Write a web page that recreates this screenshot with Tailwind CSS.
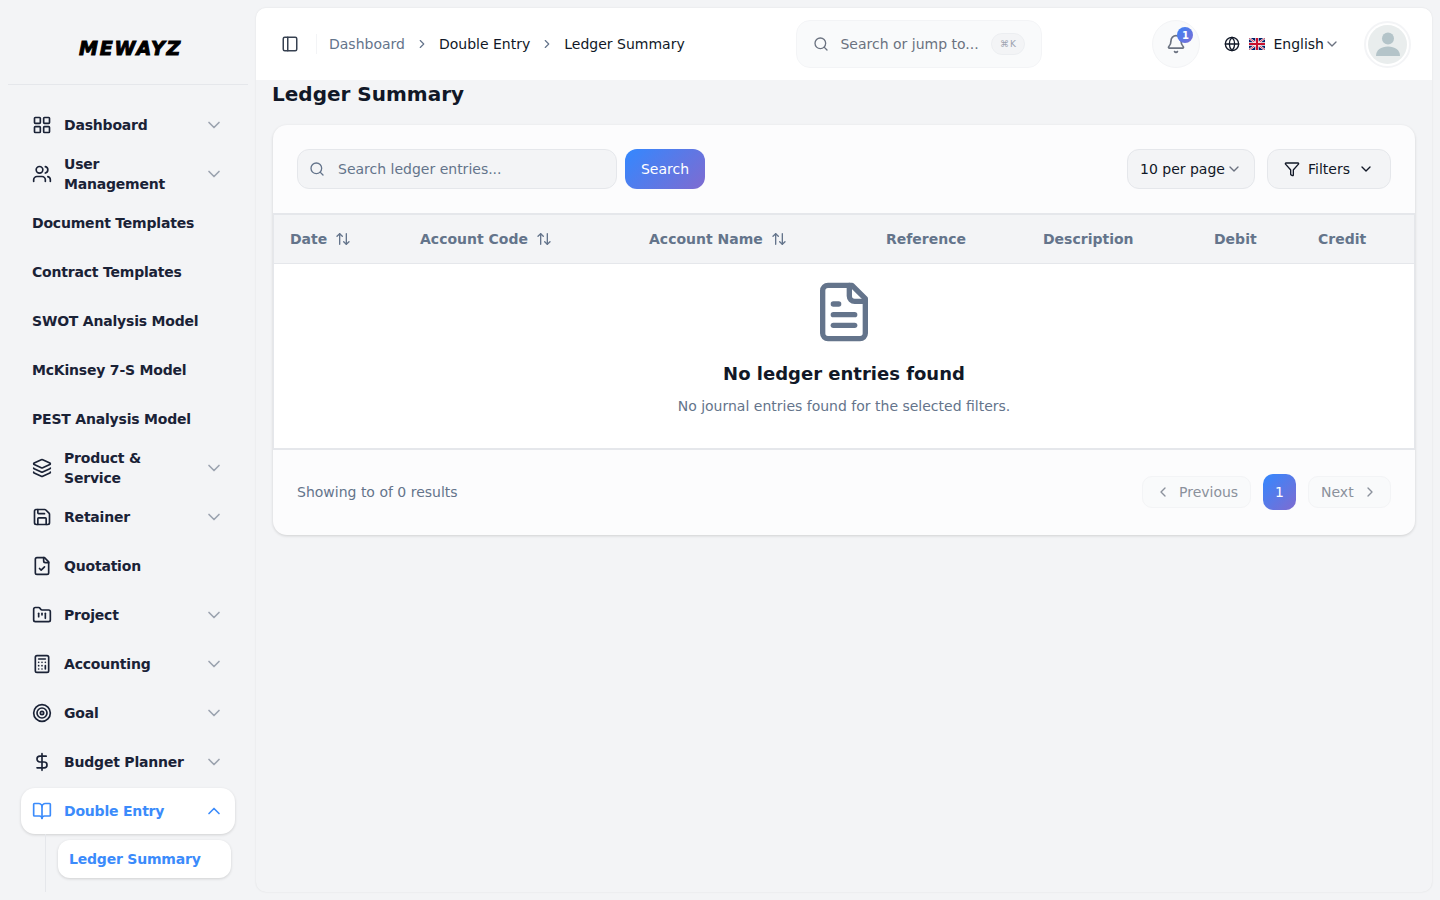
<!DOCTYPE html>
<html lang="en">
<head>
  <meta charset="UTF-8" />
  <title>Ledger Summary</title>
  <script src="https://cdn.jsdelivr.net/npm/@tailwindcss/browser@4"></script>
</head>
<body class="h-screen overflow-hidden bg-[#f3f4f6] font-['DejaVu_Sans',sans-serif] text-[#111827]">
<div class="flex h-[900px]">

  <!-- sidebar -->
  <aside class="w-[256px] shrink-0 overflow-hidden">
    <div class="mx-[8px] h-[85px] border-b border-[#e5e7eb] flex items-center justify-center pt-[13px] pl-[5px]">
      <span class="italic font-bold text-[19px] leading-none tracking-[1.8px] text-black [-webkit-text-stroke:1px_black]">MEWAYZ</span>
    </div>
    <nav class="pt-[17px] pl-[21px] w-[235px] flex flex-col gap-[4px] text-sm font-bold tracking-[-0.2px] text-[#1a2236]">
      <a class="h-[45px] flex items-center gap-[12px] pl-[11px] pr-[11px]">
        <svg class="w-5 h-5 shrink-0" viewBox="0 0 24 24" fill="none" stroke="currentColor" stroke-width="2" stroke-linecap="round" stroke-linejoin="round"><rect x="3" y="3" width="7" height="7" rx="1"/><rect x="14" y="3" width="7" height="7" rx="1"/><rect x="14" y="14" width="7" height="7" rx="1"/><rect x="3" y="14" width="7" height="7" rx="1"/></svg>
        <span class="flex-1">Dashboard</span>
        <svg class="w-5 h-5 text-[#9ca3af]" viewBox="0 0 24 24" fill="none" stroke="currentColor" stroke-width="2" stroke-linecap="round" stroke-linejoin="round"><path d="m6 9 6 6 6-6"/></svg>
      </a>
      <a class="h-[45px] flex items-center gap-[12px] pl-[11px] pr-[11px]">
        <svg class="w-5 h-5 shrink-0" viewBox="0 0 24 24" fill="none" stroke="currentColor" stroke-width="2" stroke-linecap="round" stroke-linejoin="round"><path d="M16 21v-2a4 4 0 0 0-4-4H6a4 4 0 0 0-4 4v2"/><circle cx="9" cy="7" r="4"/><path d="M22 21v-2a4 4 0 0 0-3-3.87"/><path d="M16 3.13a4 4 0 0 1 0 7.75"/></svg>
        <span class="flex-1">User<br>Management</span>
        <svg class="w-5 h-5 text-[#9ca3af]" viewBox="0 0 24 24" fill="none" stroke="currentColor" stroke-width="2" stroke-linecap="round" stroke-linejoin="round"><path d="m6 9 6 6 6-6"/></svg>
      </a>
      <a class="h-[45px] flex items-center pl-[11px]">Document Templates</a>
      <a class="h-[45px] flex items-center pl-[11px]">Contract Templates</a>
      <a class="h-[45px] flex items-center pl-[11px]">SWOT Analysis Model</a>
      <a class="h-[45px] flex items-center pl-[11px]">McKinsey 7-S Model</a>
      <a class="h-[45px] flex items-center pl-[11px]">PEST Analysis Model</a>
      <a class="h-[45px] flex items-center gap-[12px] pl-[11px] pr-[11px]">
        <svg class="w-5 h-5 shrink-0" viewBox="0 0 24 24" fill="none" stroke="currentColor" stroke-width="2" stroke-linecap="round" stroke-linejoin="round"><path d="M12.83 2.18a2 2 0 0 0-1.66 0L2.6 6.08a1 1 0 0 0 0 1.83l8.58 3.91a2 2 0 0 0 1.66 0l8.58-3.9a1 1 0 0 0 0-1.83z"/><path d="M2 12a1 1 0 0 0 .58.91l8.6 3.91a2 2 0 0 0 1.65 0l8.58-3.9A1 1 0 0 0 22 12"/><path d="M2 17a1 1 0 0 0 .58.91l8.6 3.91a2 2 0 0 0 1.65 0l8.58-3.9A1 1 0 0 0 22 17"/></svg>
        <span class="flex-1">Product &amp;<br>Service</span>
        <svg class="w-5 h-5 text-[#9ca3af]" viewBox="0 0 24 24" fill="none" stroke="currentColor" stroke-width="2" stroke-linecap="round" stroke-linejoin="round"><path d="m6 9 6 6 6-6"/></svg>
      </a>
      <a class="h-[45px] flex items-center gap-[12px] pl-[11px] pr-[11px]">
        <svg class="w-5 h-5 shrink-0" viewBox="0 0 24 24" fill="none" stroke="currentColor" stroke-width="2" stroke-linecap="round" stroke-linejoin="round"><path d="M15.2 3a2 2 0 0 1 1.4.6l3.8 3.8a2 2 0 0 1 .6 1.4V19a2 2 0 0 1-2 2H5a2 2 0 0 1-2-2V5a2 2 0 0 1 2-2z"/><path d="M17 21v-7a1 1 0 0 0-1-1H8a1 1 0 0 0-1 1v7"/><path d="M7 3v4a1 1 0 0 0 1 1h7"/></svg>
        <span class="flex-1">Retainer</span>
        <svg class="w-5 h-5 text-[#9ca3af]" viewBox="0 0 24 24" fill="none" stroke="currentColor" stroke-width="2" stroke-linecap="round" stroke-linejoin="round"><path d="m6 9 6 6 6-6"/></svg>
      </a>
      <a class="h-[45px] flex items-center gap-[12px] pl-[11px] pr-[11px]">
        <svg class="w-5 h-5 shrink-0" viewBox="0 0 24 24" fill="none" stroke="currentColor" stroke-width="2" stroke-linecap="round" stroke-linejoin="round"><path d="M15 2H6a2 2 0 0 0-2 2v16a2 2 0 0 0 2 2h12a2 2 0 0 0 2-2V7Z"/><path d="M14 2v4a2 2 0 0 0 2 2h4"/><path d="m9 15 2 2 4-4"/></svg>
        <span class="flex-1">Quotation</span>
      </a>
      <a class="h-[45px] flex items-center gap-[12px] pl-[11px] pr-[11px]">
        <svg class="w-5 h-5 shrink-0" viewBox="0 0 24 24" fill="none" stroke="currentColor" stroke-width="2" stroke-linecap="round" stroke-linejoin="round"><path d="M4 20h16a2 2 0 0 0 2-2V8a2 2 0 0 0-2-2h-7.93a2 2 0 0 1-1.66-.9l-.82-1.2A2 2 0 0 0 7.93 3H4a2 2 0 0 0-2 2v13c0 1.1.9 2 2 2Z"/><path d="M8 10v4"/><path d="M12 10v2"/><path d="M16 10v6"/></svg>
        <span class="flex-1">Project</span>
        <svg class="w-5 h-5 text-[#9ca3af]" viewBox="0 0 24 24" fill="none" stroke="currentColor" stroke-width="2" stroke-linecap="round" stroke-linejoin="round"><path d="m6 9 6 6 6-6"/></svg>
      </a>
      <a class="h-[45px] flex items-center gap-[12px] pl-[11px] pr-[11px]">
        <svg class="w-5 h-5 shrink-0" viewBox="0 0 24 24" fill="none" stroke="currentColor" stroke-width="2" stroke-linecap="round" stroke-linejoin="round"><rect width="16" height="20" x="4" y="2" rx="2"/><line x1="8" x2="16" y1="6" y2="6"/><line x1="16" x2="16" y1="14" y2="18"/><path d="M16 10h.01"/><path d="M12 10h.01"/><path d="M8 10h.01"/><path d="M12 14h.01"/><path d="M8 14h.01"/><path d="M12 18h.01"/><path d="M8 18h.01"/></svg>
        <span class="flex-1">Accounting</span>
        <svg class="w-5 h-5 text-[#9ca3af]" viewBox="0 0 24 24" fill="none" stroke="currentColor" stroke-width="2" stroke-linecap="round" stroke-linejoin="round"><path d="m6 9 6 6 6-6"/></svg>
      </a>
      <a class="h-[45px] flex items-center gap-[12px] pl-[11px] pr-[11px]">
        <svg class="w-5 h-5 shrink-0" viewBox="0 0 24 24" fill="none" stroke="currentColor" stroke-width="2" stroke-linecap="round" stroke-linejoin="round"><circle cx="12" cy="12" r="10"/><circle cx="12" cy="12" r="6"/><circle cx="12" cy="12" r="2"/></svg>
        <span class="flex-1">Goal</span>
        <svg class="w-5 h-5 text-[#9ca3af]" viewBox="0 0 24 24" fill="none" stroke="currentColor" stroke-width="2" stroke-linecap="round" stroke-linejoin="round"><path d="m6 9 6 6 6-6"/></svg>
      </a>
      <a class="h-[45px] flex items-center gap-[12px] pl-[11px] pr-[11px]">
        <svg class="w-5 h-5 shrink-0" viewBox="0 0 24 24" fill="none" stroke="currentColor" stroke-width="2" stroke-linecap="round" stroke-linejoin="round"><line x1="12" x2="12" y1="2" y2="22"/><path d="M17 5H9.5a3.5 3.5 0 0 0 0 7h5a3.5 3.5 0 0 1 0 7H6"/></svg>
        <span class="flex-1">Budget Planner</span>
        <svg class="w-5 h-5 text-[#9ca3af]" viewBox="0 0 24 24" fill="none" stroke="currentColor" stroke-width="2" stroke-linecap="round" stroke-linejoin="round"><path d="m6 9 6 6 6-6"/></svg>
      </a>
      <a class="h-[46px] flex items-center gap-[12px] pl-[11px] pr-[11px] bg-white rounded-[14px] shadow-[0_1px_3px_rgba(0,0,0,0.15)] text-[#3b8bfb]">
        <svg class="w-5 h-5 shrink-0" viewBox="0 0 24 24" fill="none" stroke="currentColor" stroke-width="2" stroke-linecap="round" stroke-linejoin="round"><path d="M12 7v14"/><path d="M3 18a1 1 0 0 1-1-1V4a1 1 0 0 1 1-1h5a4 4 0 0 1 4 4 4 4 0 0 1 4-4h5a1 1 0 0 1 1 1v13a1 1 0 0 1-1 1h-6a3 3 0 0 0-3 3 3 3 0 0 0-3-3z"/></svg>
        <span class="flex-1">Double Entry</span>
        <svg class="w-5 h-5" viewBox="0 0 24 24" fill="none" stroke="currentColor" stroke-width="2" stroke-linecap="round" stroke-linejoin="round"><path d="m18 15-6-6-6 6"/></svg>
      </a>
      <div class="-mt-[4px] ml-[24px] pl-[12px] h-[58px] border-l border-[#e5e7eb] pt-[6px]">
        <a class="h-[38px] w-[173px] flex items-center pl-[11px] bg-white rounded-[12px] shadow-[0_1px_3px_rgba(0,0,0,0.15)] text-[#3b8bfb]">Ledger Summary</a>
      </div>
    </nav>
  </aside>

  <!-- main panel -->
  <main class="mt-[8px] w-[1176px] h-[884px] rounded-[10px] bg-[#f3f4f6] shadow-[0_0_2px_rgba(0,0,0,0.1)] overflow-hidden">
    <header class="h-[72px] bg-white flex items-center pl-[25px] pr-[21px]">
      <svg class="w-[18px] h-[18px] text-[#374151] shrink-0" viewBox="0 0 24 24" fill="none" stroke="currentColor" stroke-width="2" stroke-linecap="round" stroke-linejoin="round"><rect width="18" height="18" x="3" y="3" rx="2"/><path d="M9 3v18"/></svg>
      <div class="w-px h-[20px] bg-[#f3f4f6] ml-[17px] mr-[12px]"></div>
      <div class="flex items-center text-sm text-[#111827]">
        <span class="text-[#64748b]">Dashboard</span>
        <svg class="w-[14px] h-[14px] mx-[10px] text-[#64748b]" viewBox="0 0 24 24" fill="none" stroke="currentColor" stroke-width="2" stroke-linecap="round" stroke-linejoin="round"><path d="m9 18 6-6-6-6"/></svg>
        <span>Double Entry</span>
        <svg class="w-[14px] h-[14px] mx-[10px] text-[#64748b]" viewBox="0 0 24 24" fill="none" stroke="currentColor" stroke-width="2" stroke-linecap="round" stroke-linejoin="round"><path d="m9 18 6-6-6-6"/></svg>
        <span>Ledger Summary</span>
      </div>
      <div class="ml-auto w-[246px] h-[48px] rounded-[14px] bg-[#f9fafb] border border-[#f3f4f6] flex items-center pl-[16px] pr-[16px] text-sm text-[#6b7280]">
        <svg class="w-4 h-4 shrink-0" viewBox="0 0 24 24" fill="none" stroke="currentColor" stroke-width="2" stroke-linecap="round" stroke-linejoin="round"><circle cx="11" cy="11" r="8"/><path d="m21 21-4.3-4.3"/></svg>
        <span class="ml-[11px]">Search or jump to...</span>
        <span class="ml-auto w-[34px] h-[22px] rounded-full bg-[#f3f4f6] border border-[#eceef1] flex items-center justify-center text-[9px] tracking-[1px] text-[#9ca3af]">⌘K</span>
      </div>
      <div class="relative ml-[110px] w-[48px] h-[48px] rounded-full bg-[#f9fafb] border border-[#f3f4f6] flex items-center justify-center text-[#6b7280]">
        <svg class="w-5 h-5" viewBox="0 0 24 24" fill="none" stroke="currentColor" stroke-width="2" stroke-linecap="round" stroke-linejoin="round"><path d="M10.268 21a2 2 0 0 0 3.464 0"/><path d="M3.262 15.326A1 1 0 0 0 4 17h16a1 1 0 0 0 .74-1.673C19.41 13.956 18 12.499 18 8A6 6 0 0 0 6 8c0 4.499-1.411 5.956-2.738 7.326"/></svg>
        <span class="absolute top-[6px] right-[6px] w-[16px] h-[16px] rounded-full bg-[linear-gradient(135deg,#3b82f6,#7b6dd4)] text-white text-[10px] font-bold flex items-center justify-center">1</span>
      </div>
      <div class="ml-[24px] flex items-center text-sm">
        <svg class="w-4 h-4" viewBox="0 0 24 24" fill="none" stroke="currentColor" stroke-width="2" stroke-linecap="round" stroke-linejoin="round"><circle cx="12" cy="12" r="10"/><path d="M12 2a14.5 14.5 0 0 0 0 20 14.5 14.5 0 0 0 0-20"/><path d="M2 12h20"/></svg>
        <svg class="ml-[9px] w-[16px] h-[12px] rounded-[1px]" viewBox="0 0 60 45" preserveAspectRatio="none"><rect width="60" height="45" fill="#012169"/><path d="M0 0 60 45M60 0 0 45" stroke="#fff" stroke-width="8"/><path d="M0 0 60 45M60 0 0 45" stroke="#c8102e" stroke-width="3"/><path d="M30 0v45M0 22.500h60" stroke="#fff" stroke-width="13"/><path d="M30 0v45M0 22.500h60" stroke="#c8102e" stroke-width="8"/></svg>
        <span class="ml-[8px]">English</span>
        <svg class="w-4 h-4 text-[#6b7280]" viewBox="0 0 24 24" fill="none" stroke="currentColor" stroke-width="2" stroke-linecap="round" stroke-linejoin="round"><path d="m6 9 6 6 6-6"/></svg>
      </div>
      <div class="ml-[24px] w-[47px] h-[47px] rounded-full border-2 border-[#f3f4f6] p-[2px]">
        <div class="w-full h-full rounded-full bg-[#e9eded] flex items-center justify-center overflow-hidden">
          <svg class="w-[28px] h-[28px] text-[#b4c4c9]" viewBox="0 0 28 28" fill="currentColor"><circle cx="14" cy="8.500" r="6"/><path d="M2 26c0-6 5-9.500 12-9.500S26 20 26 26z"/></svg>
        </div>
      </div>
    </header>

    <div class="pl-[16px] pr-[17px]">
      <h1 class="text-xl font-bold leading-[28px]">Ledger Summary</h1>
      <section class="mt-[17px] ml-[1px] w-[1142px] h-[410px] rounded-[14px] bg-[#fcfcfd] shadow-[0_1px_3px_rgba(0,0,0,0.15)] overflow-hidden flex flex-col">
        <div class="h-[88px] shrink-0 flex items-center px-[24px] text-sm">
          <div class="w-[320px] h-[40px] rounded-[12px] bg-[#f3f4f6] border border-[#e5e7eb] flex items-center pl-[11px] text-[#64748b]">
            <svg class="w-4 h-4 shrink-0" viewBox="0 0 24 24" fill="none" stroke="currentColor" stroke-width="2" stroke-linecap="round" stroke-linejoin="round"><circle cx="11" cy="11" r="8"/><path d="m21 21-4.3-4.3"/></svg>
            <span class="ml-[13px]">Search ledger entries...</span>
          </div>
          <button class="ml-[8px] w-[80px] h-[40px] rounded-[12px] bg-[linear-gradient(135deg,#3388ff,#7f6bd0)] text-white">Search</button>
          <div class="ml-auto w-[128px] h-[40px] rounded-[12px] bg-[#f3f4f6] border border-[#e5e7eb] flex items-center pl-[12px]">
            <span>10 per page</span>
            <svg class="ml-[1px] w-4 h-4 text-[#6b7280]" viewBox="0 0 24 24" fill="none" stroke="currentColor" stroke-width="2" stroke-linecap="round" stroke-linejoin="round"><path d="m6 9 6 6 6-6"/></svg>
          </div>
          <div class="ml-[12px] w-[124px] h-[40px] rounded-[12px] bg-[#f3f4f6] border border-[#e5e7eb] flex items-center pl-[16px]">
            <svg class="w-4 h-4" viewBox="0 0 24 24" fill="none" stroke="currentColor" stroke-width="2" stroke-linecap="round" stroke-linejoin="round"><path d="M10 20a1 1 0 0 0 .553.895l2 1A1 1 0 0 0 14 21v-7a2 2 0 0 1 .517-1.341L21.74 4.67A1 1 0 0 0 21 3H3a1 1 0 0 0-.742 1.67l7.225 7.989A2 2 0 0 1 10 14z"/></svg>
            <span class="ml-[8px]">Filters</span>
            <svg class="ml-[8px] w-4 h-4" viewBox="0 0 24 24" fill="none" stroke="currentColor" stroke-width="2" stroke-linecap="round" stroke-linejoin="round"><path d="m6 9 6 6 6-6"/></svg>
          </div>
        </div>
        <div class="border-2 border-x-[1px] border-[#e5e7eb] border-b-2">
          <div class="h-[49px] bg-[#f3f4f6] border-b border-[#e5e7eb] grid grid-cols-[130px_229px_237px_157px_171px_104px_1fr] items-center pl-[16px] text-sm font-bold text-[#64748b]">
            <div class="flex items-center gap-[8px]">Date
              <svg class="w-4 h-4" viewBox="0 0 24 24" fill="none" stroke="currentColor" stroke-width="2" stroke-linecap="round" stroke-linejoin="round"><path d="m21 16-4 4-4-4"/><path d="M17 20V4"/><path d="m3 8 4-4 4 4"/><path d="M7 4v16"/></svg>
            </div>
            <div class="flex items-center gap-[8px]">Account Code
              <svg class="w-4 h-4" viewBox="0 0 24 24" fill="none" stroke="currentColor" stroke-width="2" stroke-linecap="round" stroke-linejoin="round"><path d="m21 16-4 4-4-4"/><path d="M17 20V4"/><path d="m3 8 4-4 4 4"/><path d="M7 4v16"/></svg>
            </div>
            <div class="flex items-center gap-[8px]">Account Name
              <svg class="w-4 h-4" viewBox="0 0 24 24" fill="none" stroke="currentColor" stroke-width="2" stroke-linecap="round" stroke-linejoin="round"><path d="m21 16-4 4-4-4"/><path d="M17 20V4"/><path d="m3 8 4-4 4 4"/><path d="M7 4v16"/></svg>
            </div>
            <div>Reference</div>
            <div>Description</div>
            <div>Debit</div>
            <div>Credit</div>
          </div>
          <div class="h-[184px] bg-white flex flex-col items-center pt-[16px]">
            <svg class="w-16 h-16 text-[#64748b]" viewBox="0 0 24 24" fill="none" stroke="currentColor" stroke-width="2" stroke-linecap="round" stroke-linejoin="round"><path d="M15 2H6a2 2 0 0 0-2 2v16a2 2 0 0 0 2 2h12a2 2 0 0 0 2-2V7Z"/><path d="M14 2v4a2 2 0 0 0 2 2h4"/><path d="M10 9H8"/><path d="M16 13H8"/><path d="M16 17H8"/></svg>
            <h3 class="mt-[16px] text-lg font-bold leading-[28px]">No ledger entries found</h3>
            <p class="mt-[8px] text-sm leading-[20px] text-[#64748b]">No journal entries found for the selected filters.</p>
          </div>
        </div>
        <div class="flex-1 flex items-center px-[24px] pb-[2px] text-sm">
          <span class="text-[#64748b]">Showing to of 0 results</span>
          <div class="ml-auto flex items-center gap-[12px]">
            <div class="w-[109px] h-[32px] rounded-[10px] bg-[#f9fafb] border border-[#f3f4f6] flex items-center pl-[12px] text-[#8b919c]">
              <svg class="w-[16px] h-[16px]" viewBox="0 0 24 24" fill="none" stroke="currentColor" stroke-width="2" stroke-linecap="round" stroke-linejoin="round"><path d="m15 18-6-6 6-6"/></svg>
              <span class="ml-[8px]">Previous</span>
            </div>
            <div class="w-[33px] h-[36px] rounded-[10px] bg-[linear-gradient(135deg,#3388ff,#7f6bd0)] text-white flex items-center justify-center">1</div>
            <div class="w-[83px] h-[32px] rounded-[10px] bg-[#f9fafb] border border-[#f3f4f6] flex items-center pl-[12px] text-[#8b919c]">
              <span>Next</span>
              <svg class="ml-[8px] w-[16px] h-[16px]" viewBox="0 0 24 24" fill="none" stroke="currentColor" stroke-width="2" stroke-linecap="round" stroke-linejoin="round"><path d="m9 18 6-6-6-6"/></svg>
            </div>
          </div>
        </div>
      </section>
    </div>
  </main>
</div>
</body>
</html>
